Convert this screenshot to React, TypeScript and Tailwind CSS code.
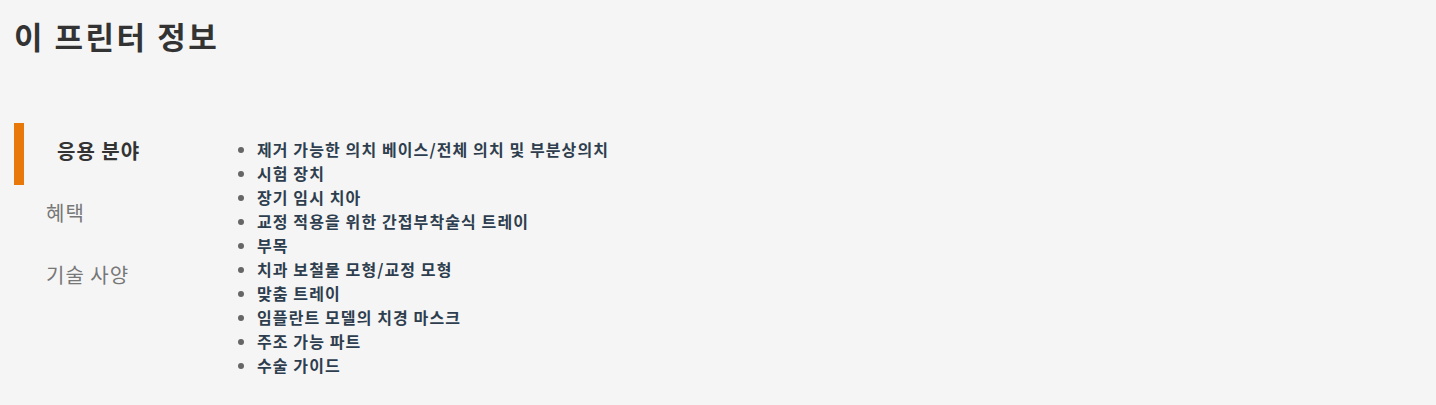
import React from "react";

const tabs = ["응용 분야", "혜택", "기술 사양"];

const uses = [
  "제거 가능한 의치 베이스/전체 의치 및 부분상의치",
  "시험 장치",
  "장기 임시 치아",
  "교정 적용을 위한 간접부착술식 트레이",
  "부목",
  "치과 보철물 모형/교정 모형",
  "맞춤 트레이",
  "임플란트 모델의 치경 마스크",
  "주조 가능 파트",
  "수술 가이드",
];

export default function App() {
  const active = 0;
  return (
    <div
      className="w-[1436px] h-[405px] bg-[#f5f5f5] text-[#333]"
      style={{ fontFamily: '"Noto Sans CJK KR", "Noto Sans", sans-serif' }}
    >
      <h1 className="pl-[14px] pt-[16px] text-[31px] font-bold leading-[40px] tracking-[2.5px] text-[#333]">
        이 프린터 정보
      </h1>

      <div className="flex pl-[14px] pt-[67px]">
        <div className="w-[210px] shrink-0">
          {tabs.map((t, i) => (
            <div
              key={t}
              className={`flex items-center h-[62px] border-l-[10px] pb-[6px] ${
                i === active
                  ? "border-[#e8780a] pl-[33px] font-bold text-[#333]"
                  : "border-transparent pl-[22px] text-[#777]"
              } text-[20px] tracking-[1px]`}
            >
              {t}
            </div>
          ))}
        </div>

        <ul className="list-disc pl-[33px] pt-[14px] text-[16px] font-bold leading-[24px] tracking-[1.1px] text-[#2e3e4e] marker:text-[#666]">
          {uses.map((u) => (
            <li key={u}>{u}</li>
          ))}
        </ul>
      </div>
    </div>
  );
}
